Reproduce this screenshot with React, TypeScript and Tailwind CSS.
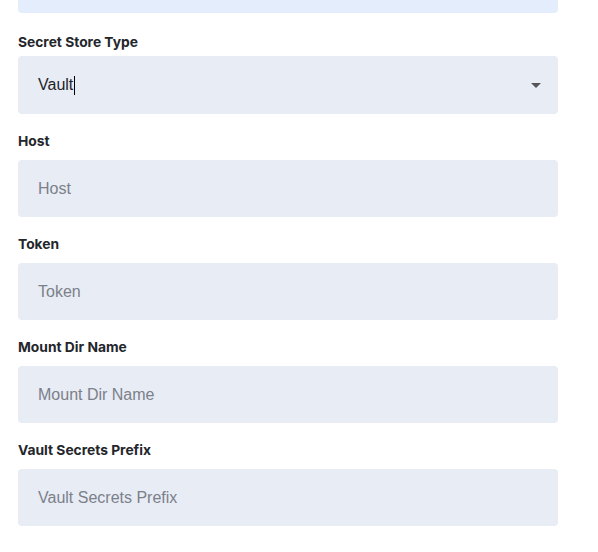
const fields = ["Host", "Token", "Mount Dir Name", "Vault Secrets Prefix"];

function Label({ children }: { children: React.ReactNode }) {
  return (
    <label className="block h-5 font-['Inter',sans-serif] text-[13.8px] font-bold leading-5 text-[#23262b]">
      {children}
    </label>
  );
}

function Field({ name }: { name: string }) {
  return (
    <div className="mt-[17px]">
      <Label>{name}</Label>
      <div className="mt-[9px] flex h-[57px] items-center rounded-[4px] bg-[#e7ecf5] pl-5 font-['Liberation_Sans',Arial,sans-serif] text-base text-[#7c8089]">
        {name}
      </div>
    </div>
  );
}

export default function App() {
  return (
    <div className="h-[552px] w-[598px] overflow-hidden bg-white">
      <div className="w-[540px] pl-[18px] box-content">
        <div className="-mt-8 h-[45px] rounded-[4px] bg-[#e4edfb]" />
        <div className="mt-[19px]">
          <Label>Secret Store Type</Label>
          <div className="mt-[4px] flex h-[58px] items-center justify-between rounded-[4px] bg-[#e7ecf5] pl-5 pr-4 font-['Liberation_Sans',Arial,sans-serif] text-base text-[#1f2328]">
            <span className="flex items-center">
              Vault
              <span className="ml-px inline-block h-[19px] w-px bg-black" />
            </span>
            <svg width="10" height="5" viewBox="0 0 10 5" className="mr-px">
              <path d="M0 0h10L5 5z" fill="#555" />
            </svg>
          </div>
        </div>
        {fields.map((f) => (
          <Field key={f} name={f} />
        ))}
      </div>
    </div>
  );
}
